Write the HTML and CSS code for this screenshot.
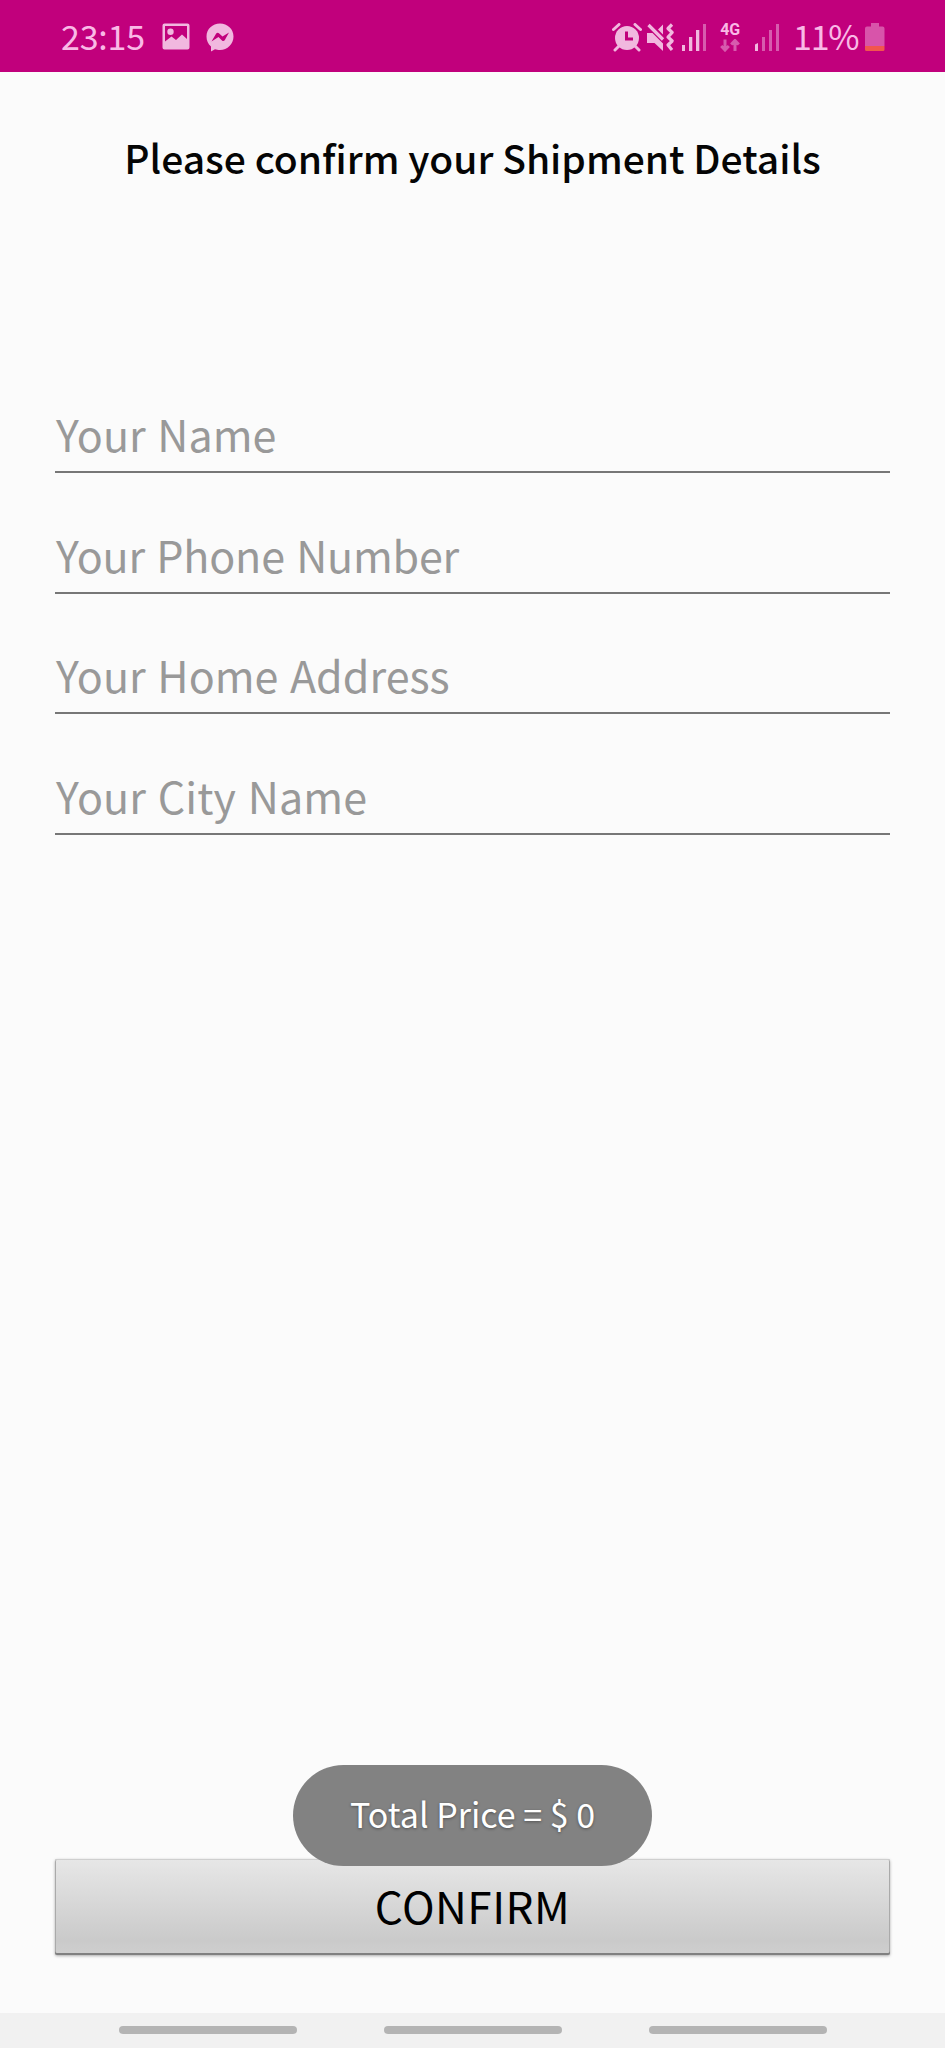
FILE: index.html
```html
<!DOCTYPE html>
<html lang="en">
<head>
<meta charset="utf-8">
<title>Shipment Details</title>
<link rel="stylesheet" href="styles.css">
</head>
<body>
<div class="screen">
  <header class="status">
    <span class="time">23:15</span>
    <svg class="picture" width="28" height="28" viewBox="0 0 28 28"><path fill-rule="evenodd" d="M2.5 0.5h23a2 2 0 0 1 2 2v22a2 2 0 0 1-2 2h-23a2 2 0 0 1-2-2v-22a2 2 0 0 1 2-2zM3 3v15.500l6.500-5 4.500 3.500 6-5.500 5 4.500V3zM8.500 5.500a3.200 3.200 0 1 1 0 6.400a3.200 3.200 0 1 1 0-6.400z"/></svg>
    <svg class="messenger" width="28" height="29" viewBox="0 0 28 29"><path fill-rule="evenodd" d="M14 0.500C21.500 0.500 27.500 6 27.500 13.500S21.500 27 14 27c-2 0-3.500-.3-5-.8L5 28.500V23.500C2 21 0.500 17.500 0.500 13.500C0.500 6 6.500 0.500 14 0.500zM5.500 18.500l7-4.500 3.500 3.500c1 .8 2 .6 2.700-.3L23 9.500l-6.500 4-3.300-3.100c-1-.9-2.200-.8-3 .2z"/></svg>
    <span class="spacer"></span>
    <svg class="alarm" width="30" height="29" viewBox="0 0 30 29"><circle cx="15" cy="15" r="12"/><g class="stroke"><path d="M1.500 6.500L7 1.500M23 1.500l5.500 5M7 23l-4 4M23 23l4 4"/></g><path class="cut" d="M14.500 8.500v7.500h6.500"/></svg>
    <svg class="mute" width="29" height="30" viewBox="0 0 29 30"><path d="M1 10h5.500l10.500 10.500v7.500L8.500 20H1zM12 6.500L17 1.500v10z"/><path class="slash" d="M2.500 2l14.500 14.500"/><path class="wave" d="M26 1.500l-4 4 4.200 4-4.200 4.500 4.200 4-4.200 4 4 5"/></svg>
    <svg class="signal" width="24" height="28" viewBox="0 0 24 28"><rect x="0" y="21" width="3" height="6"/><rect x="7" y="13" width="3.300" height="14"/><rect x="14" y="6" width="3.300" height="21"/><rect class="faint" x="21" y="0" width="3" height="27"/></svg>
    <span class="network"><span class="gen">4G</span><svg width="20" height="13" viewBox="0 0 20 13"><path d="M5 0.500v11M1.200 7L5 11l3.800-4M15 12V1.500M11.200 5.500L15 1.500l3.800 4"/></svg></span>
    <svg class="signal second" width="25" height="28" viewBox="0 0 25 28"><path d="M0 20.500l3-1.500v8H0z"/><rect class="faint" x="7" y="13" width="3" height="14"/><rect class="faint" x="14" y="6" width="3" height="21"/><rect class="faint" x="21" y="0" width="3" height="27"/></svg>
    <span class="percent">11%</span>
    <svg class="battery" width="20" height="29" viewBox="0 0 20 29"><path class="cell" d="M6 0h8v3.500h3.500a2 2 0 0 1 2 2V23H0V5.500a2 2 0 0 1 2-2h4z"/><path class="low" d="M0 23h19.500v3.500a1.500 1.500 0 0 1-1.500 1.500H1.500A1.500 1.500 0 0 1 0 26.500z"/></svg>
  </header>
  <main class="content">
    <h1 class="title">Please confirm your Shipment Details</h1>
    <form class="form">
      <div class="field name">Your Name</div>
      <div class="field phone">Your Phone Number</div>
      <div class="field address">Your Home Address</div>
      <div class="field city">Your City Name</div>
    </form>
    <button class="confirm" type="button"><span>CONFIRM</span></button>
    <div class="toast"><span>Total Price = $ 0</span></div>
  </main>
  <nav class="nav"><i></i><i></i><i></i></nav>
</div>
</body>
</html>
```

FILE: styles.css
```css
* { box-sizing: border-box; }
body { margin: 0; font-family: "Noto Sans CJK JP", "Noto Sans", sans-serif; background: #fbfbfb; }
.screen { position: relative; width: 945px; height: 2048px; display: flex; flex-direction: column; overflow: hidden; }

.status { height: 72px; flex: none; background: #c1007c; color: #f9b9e6; fill: #f1b8df; display: flex; align-items: flex-start; padding: 23px 60px 0 61px; }
.status svg { flex: none; display: block; }
.time, .percent { font-size: 34px; line-height: 26px; white-space: nowrap; flex: none; font-weight: 400; }
.time { width: 101px; letter-spacing: -0.2px; }
.picture { margin-right: 16px; }
.spacer { flex: 1; }
.stroke { stroke: #f1b8df; stroke-width: 3; stroke-linecap: round; }
.cut { fill: none; stroke: #c1007c; stroke-width: 3; }
.alarm { margin-right: 4px; }
.mute { margin-right: 7px; }
.slash, .wave { fill: none; stroke: #f1b8df; stroke-width: 3.2; stroke-linejoin: round; }
.signal { margin-top: 1px; }
.faint { fill: #d75bae; }
.network { width: 22px; margin-left: 13px; flex: none; display: flex; flex-direction: column; align-items: center; }
.network svg { fill: none; stroke: #d75bae; stroke-width: 3; margin-top: 1px; }
.gen { font: bold 16px/13px "Roboto", sans-serif; letter-spacing: -0.2px; padding-bottom: 2px; }
.second { margin-left: 14px; }
.percent { width: 72px; margin-left: 13px; letter-spacing: -1.2px; }
.cell { fill: #d854aa; }
.low { fill: #f2564e; }

.content { flex: 1; position: relative; padding: 55px 55px 0; display: flex; flex-direction: column; }
.title { margin: 0; font-size: 39px; line-height: 60px; font-weight: 500; text-align: center; color: #050505; white-space: nowrap; }
.form { margin-top: 216px; display: flex; flex-direction: column; gap: 50.6px; }
.field { height: 70px; padding-left: 1px; line-height: 60px; font-size: 43px; font-weight: 400; color: #999; border-bottom: 2px solid #777; white-space: nowrap; word-spacing: 2px; }
.phone { letter-spacing: -0.2px; }
.city { letter-spacing: 0.1px; }
.confirm { margin: auto 0 58px; height: 96px; flex: none; padding: 0; border: 0; border-radius: 2px; background: linear-gradient(#e7e7e7, #cacaca 85%, #cfcfcf); box-shadow: inset 0 1px #cfcfcf, inset 0 -2px #808080, inset 1px 0 #aaa, inset -1px 0 #aaa, 0 1px 3px #aaa; font-family: inherit; font-size: 44px; font-weight: 400; letter-spacing: 0.5px; color: #000; }
.confirm span { display: block; height: 96px; line-height: 93px; }
.toast { position: absolute; left: 293px; top: 1693px; width: 359px; height: 101px; border-radius: 51px; background: #828282; color: #fff; font-size: 34px; line-height: 97px; text-align: center; white-space: nowrap; text-shadow: 0 1px 3px rgba(0,0,0,.4); }

.nav { height: 35px; flex: none; background: #f1f1f1; display: flex; gap: 87px; padding: 13px 0 0 119px; }
.nav i { width: 178px; height: 8px; border-radius: 4px; background: #b4b4b4; }
```
